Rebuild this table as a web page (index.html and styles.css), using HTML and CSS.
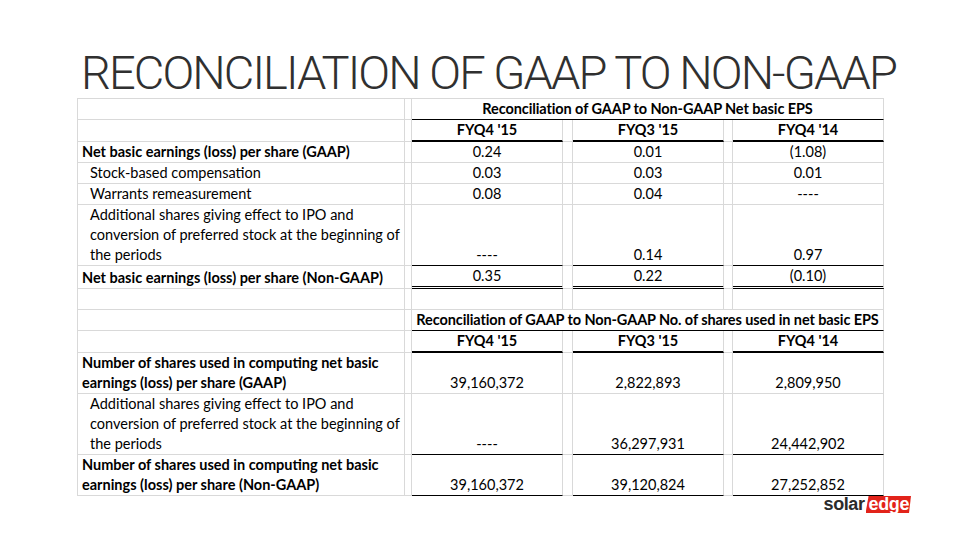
FILE: index.html
```html
<!DOCTYPE html>
<html lang="en">
<head>
<meta charset="utf-8">
<title>Reconciliation of GAAP to Non-GAAP</title>
<link rel="stylesheet" href="styles.css">
</head>
<body>
<div class="slide">
  <h1 class="title">RECONCILIATION OF GAAP TO NON-GAAP</h1>
  <table class="recon">
    <colgroup>
      <col class="c-label"><col class="c-sp1"><col class="c-val"><col class="c-gap2"><col class="c-val"><col class="c-gap3"><col class="c-val">
    </colgroup>
    <tbody>
      <tr>
        <td></td><td></td>
        <td colspan="5" class="hdr">Reconciliation of GAAP to Non-GAAP Net basic EPS</td>
      </tr>
      <tr>
        <td></td><td></td>
        <td class="per">FYQ4 '15</td><td></td><td class="per">FYQ3 '15</td><td></td><td class="per">FYQ4 '14</td>
      </tr>
      <tr>
        <td class="lbl b">Net basic earnings (loss) per share (GAAP)</td><td></td>
        <td class="v">0.24</td><td></td><td class="v">0.01</td><td></td><td class="v">(1.08)</td>
      </tr>
      <tr>
        <td class="lbl ind">Stock-based compensation</td><td></td>
        <td class="v">0.03</td><td></td><td class="v">0.03</td><td></td><td class="v">0.01</td>
      </tr>
      <tr>
        <td class="lbl ind">Warrants remeasurement</td><td></td>
        <td class="v">0.08</td><td></td><td class="v">0.04</td><td></td><td class="v">----</td>
      </tr>
      <tr>
        <td class="lbl ind">Additional shares giving effect to IPO and<br>conversion of preferred stock at the beginning of<br>the periods</td><td></td>
        <td class="v ul">----</td><td></td><td class="v ul">0.14</td><td></td><td class="v ul">0.97</td>
      </tr>
      <tr>
        <td class="lbl b">Net basic earnings (loss) per share (Non-GAAP)</td><td></td>
        <td class="v dbl">0.35</td><td></td><td class="v dbl">0.22</td><td></td><td class="v dbl">(0.10)</td>
      </tr>
      <tr class="blank">
        <td></td><td></td><td></td><td></td><td></td><td></td><td></td>
      </tr>
      <tr>
        <td></td><td></td>
        <td colspan="5" class="hdr">Reconciliation of GAAP to Non-GAAP No. of shares used in net basic EPS</td>
      </tr>
      <tr>
        <td></td><td></td>
        <td class="per">FYQ4 '15</td><td></td><td class="per">FYQ3 '15</td><td></td><td class="per">FYQ4 '14</td>
      </tr>
      <tr>
        <td class="lbl b">Number of shares used in computing net basic<br>earnings (loss) per share (GAAP)</td><td></td>
        <td class="v">39,160,372</td><td></td><td class="v">2,822,893</td><td></td><td class="v">2,809,950</td>
      </tr>
      <tr>
        <td class="lbl ind">Additional shares giving effect to IPO and<br>conversion of preferred stock at the beginning of<br>the periods</td><td></td>
        <td class="v ul">----</td><td></td><td class="v ul">36,297,931</td><td></td><td class="v ul">24,442,902</td>
      </tr>
      <tr>
        <td class="lbl b">Number of shares used in computing net basic<br>earnings (loss) per share (Non-GAAP)</td><td></td>
        <td class="v ul">39,160,372</td><td></td><td class="v ul">39,120,824</td><td></td><td class="v ul">27,252,852</td>
      </tr>
    </tbody>
  </table>
  <div class="footer">
    <div class="logo"><span class="logo-solar">solar</span><span class="logo-edge">edge</span></div>
  </div>
</div>
</body>
</html>
```
FILE: styles.css
```css
html, body {
  margin: 0;
  padding: 0;
  background: #ffffff;
}

.slide {
  width: 960px;
  height: 540px;
  padding-top: 49px;
  box-sizing: border-box;
  background: #ffffff;
  overflow: hidden;
}

.title {
  margin: 0;
  padding-left: 81px;
  font-family: "Roboto", "Lato", sans-serif;
  font-weight: 300;
  font-size: 47px;
  line-height: 48px;
  height: 48px;
  color: #303030;
  letter-spacing: -1.9px;
  white-space: nowrap;
}

.recon {
  margin: 1px 0 0 77px;
  table-layout: fixed;
  width: 806px;
  border-collapse: separate;
  border-spacing: 0;
  border-top: 1px solid #d9d9d9;
  border-left: 1px solid #d9d9d9;
  font-family: "Lato", "Open Sans", sans-serif;
  font-size: 14.5px;
  color: #000000;
}

.c-label { width: 327px; }
.c-sp1 { width: 7px; }
.c-val { width: 151px; }
.c-gap2 { width: 10px; }
.c-gap3 { width: 9px; }

.recon td {
  padding: 0;
  line-height: 20px;
  height: 20px;
  vertical-align: bottom;
  border-right: 1px solid #d9d9d9;
  border-bottom: 1px solid #d9d9d9;
  white-space: nowrap;
}

.recon .lbl {
  padding-left: 4px;
}

.recon .lbl.ind {
  padding-left: 12px;
}

.recon .b {
  font-weight: 700;
}

.recon .hdr {
  text-align: center;
  font-weight: 700;
  letter-spacing: -0.1px;
  border-bottom-color: #000000;
}

.recon .per {
  text-align: center;
  font-weight: 700;
  border-bottom: 2px solid #000000;
}

.recon .v {
  text-align: center;
}

.recon .ul {
  border-bottom-color: #000000;
}

.recon .dbl {
  border-bottom: 3px double #000000;
}

.recon .blank td {
  height: 20px;
}

.footer {
  display: flex;
  justify-content: flex-end;
  padding-right: 49px;
}

.logo {
  display: flex;
  align-items: stretch;
  height: 17px;
  font-family: "Liberation Sans", Arial, sans-serif;
  font-weight: 700;
  font-size: 18px;
  line-height: 17px;
  letter-spacing: -0.4px;
}

.logo-solar {
  color: #2b2b2b;
  padding-right: 1px;
}

.logo-edge {
  color: #ffffff;
  background: #e2231a;
  padding: 0 2px 0 3px;
  clip-path: polygon(3px 0, 100% 0, calc(100% - 2px) 100%, 0 100%);
}
```
